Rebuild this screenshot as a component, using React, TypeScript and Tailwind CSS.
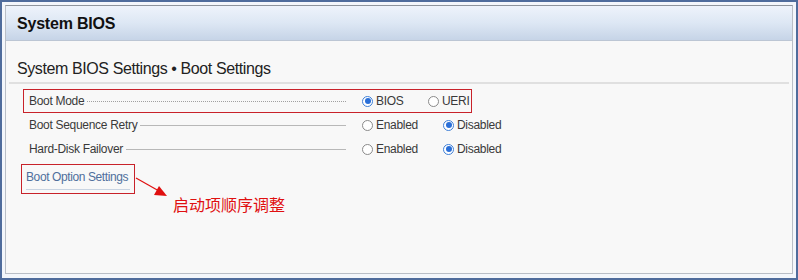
import React from "react";

// ─── Radio ────────────────────────────────────────────────────────────────────
function Radio({ checked }: { checked: boolean }) {
  return (
    <span
      className={`flex h-[11px] w-[11px] shrink-0 items-center justify-center rounded-full border ${
        checked ? "border-[#3f7fd6] bg-white" : "border-[#8a8a8a] bg-white"
      }`}
    >
      {checked && <span className="h-[6px] w-[6px] rounded-full bg-[#2a6fd8]" />}
    </span>
  );
}

function Option({ label, checked, width }: { label: string; checked: boolean; width?: string }) {
  return (
    <div className={`flex shrink-0 items-center gap-[3px] ${width ?? ""}`}>
      <Radio checked={checked} />
      <span className="tracking-[-0.3px]">{label}</span>
    </div>
  );
}

// ─── Setting row ──────────────────────────────────────────────────────────────
function SettingRow({
  label,
  options,
  firstWidth,
  dotted,
  highlight,
}: {
  label: string;
  options: { label: string; checked: boolean }[];
  firstWidth: string;
  dotted?: boolean;
  highlight?: boolean;
}) {
  return (
    <div
      className={`flex h-[24px] w-[449px] items-center pl-[5px] text-[12px] text-[#3a3a3a] ${
        highlight ? "border border-[#c8222a]" : "border border-transparent"
      }`}
    >
      {/* label + leader, ends where the options column starts */}
      <div className="flex w-[317px] shrink-0 items-center">
        <span className="tracking-[-0.3px]">{label}</span>
        <span
          className={`ml-[3px] w-0 flex-1 ${
            dotted ? "border-t border-dotted border-[#a0a0a0]" : "border-t border-[#b8b8b8]"
          }`}
        />
      </div>
      <div className="ml-[16px] flex shrink-0 items-center">
        <Option {...options[0]} width={firstWidth} />
        <Option {...options[1]} />
      </div>
    </div>
  );
}

export default function App() {
  return (
    <div
      className="h-[280px] w-[798px] border-2 border-[#4f6c9c] bg-[#f3f6fb] px-[3px] pt-[3px] pb-[4px]"
      style={{ fontFamily: '"Liberation Sans", Arial, "Noto Sans CJK SC", sans-serif' }}
    >
      <div className="relative flex h-full flex-col border border-[#b9bec6] border-t-[#8e949c] bg-[#f8f8f8]">
        {/* Header */}
        <div className="flex h-[35px] items-center border-b border-[#bcc6d4] bg-gradient-to-b from-[#eef3fb] via-[#dde7f4] to-[#c6d4e7] pl-[11px] pt-[2px]">
          <h1 className="text-[16px] font-bold tracking-[-0.2px] text-[#111]">System BIOS</h1>
        </div>

        {/* Title */}
        <div className="flex h-[41px] items-center pl-[11px] pt-[14px]">
          <h2 className="text-[16px] tracking-[-0.4px] text-[#222]">
            System BIOS Settings • Boot Settings
          </h2>
        </div>
        <div className="mx-[3px] h-[2px] bg-[#e0e0e0]" />

        {/* Settings */}
        <div className="ml-[17px] mt-[5px] flex flex-col">
          <SettingRow
            label="Boot Mode"
            dotted
            highlight
            firstWidth="w-[66px]"
            options={[
              { label: "BIOS", checked: true },
              { label: "UERI", checked: false },
            ]}
          />
          <SettingRow
            label="Boot Sequence Retry"
            firstWidth="w-[81px]"
            options={[
              { label: "Enabled", checked: false },
              { label: "Disabled", checked: true },
            ]}
          />
          <SettingRow
            label="Hard-Disk Failover"
            firstWidth="w-[81px]"
            options={[
              { label: "Enabled", checked: false },
              { label: "Disabled", checked: true },
            ]}
          />
        </div>

        {/* Link */}
        <div className="ml-[15px] mt-[3px] w-[114px] border border-[#c8222a] px-[4px] pt-[3px] pb-[3px]">
          <span className="block border-b border-[#c9d4e2] pb-[3px] text-[12px] tracking-[-0.4px] text-[#4f6f9c]">
            Boot Option Settings
          </span>
        </div>

        {/* Annotation */}
        <svg
          className="absolute left-[129px] top-[170px]"
          width="40"
          height="24"
          viewBox="0 0 40 24"
          aria-hidden="true"
        >
          <line x1="1" y1="2" x2="24" y2="15" stroke="#e01010" strokeWidth="1.2" />
          <polygon points="32,20 19,19 24,10" fill="#e01010" />
        </svg>
        <span
          className="absolute left-[167px] top-[186px] text-[16px] text-[#e01010]"
          style={{ fontFamily: '"Noto Sans CJK SC", sans-serif' }}
        >
          启动项顺序调整
        </span>
      </div>
    </div>
  );
}
